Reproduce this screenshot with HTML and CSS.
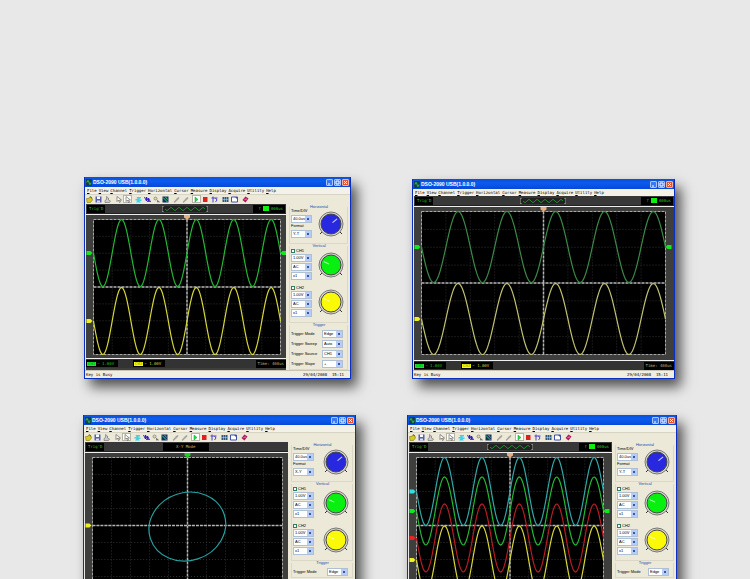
FILE: index.html
```
<!DOCTYPE html>
<html lang="en">
<head>
  <meta charset="UTF-8">
  <meta name="viewport" content="width=device-width, initial-scale=1.0">
  <title>DSO-2090 USB</title>
  <link rel="stylesheet" href="styles.css">
</head>
<body>

  <main class="gallery">
    <div class="row row-top">
      <section class="window" id="two-channel"></section>
      <section class="window window-full" id="full-view"></section>
    </div>
    <div class="row row-bottom">
      <section class="window window-wide" id="xy-mode"></section>
      <section class="window window-medium" id="four-wave"></section>
    </div>
  </main>

  <script src="script.js"></script>
</body>
</html>
```

FILE: styles.css
```
* {
  box-sizing: border-box;
}

body {
  margin: 0;
  background-color: #e8e8e8;
  font-family: "DejaVu Sans Mono", monospace;
  font-size: 4px;
  line-height: 4px;
  color: #000;
}

button,
select,
input,
fieldset,
legend {
  margin: 0;
  padding: 0;
  border: 0;
  font: inherit;
  color: inherit;
}

svg {
  display: block;
}

.gallery {
  height: 100vh;
  overflow: hidden;
  padding-top: 177px;
}

.row {
  display: flex;
  align-items: flex-end;
}

.row-top {
  padding-left: 84px;
  gap: 61px;
}

.row-bottom {
  padding: 36px 0 0 83px;
  gap: 51px;
}

/* window */
.window {
  width: 267px;
  border: 1px solid #0a2fc0;
  border-top-width: 0;
  background-color: #ece9d8;
  box-shadow: 6px 8px 12px rgba(0, 0, 0, 0.65);
}

.window-full {
  width: 263px;
}

.window-wide {
  width: 273px;
}

.window-medium {
  width: 270px;
}

.title-bar {
  display: flex;
  align-items: center;
  gap: 1px;
  height: 10px;
  padding: 0 1px;
  background: linear-gradient(#0a50d8, #0a5cf0 40%, #0848d8);
  color: #fff;
}

.title-bar .app-icon {
  width: 6px;
  height: 7px;
}

.title-bar h2 {
  flex: 1;
  margin: 0;
  font-size: 5px;
  font-weight: bold;
  font-family: "Liberation Sans", sans-serif;
}

.title-bar button {
  width: 7px;
  height: 7px;
  border: 1px solid #a8c4ff;
  border-radius: 1px;
  background-color: #3c78f0;
}

.title-bar button svg {
  width: 5px;
  height: 5px;
}

.title-bar .close {
  background-color: #e4532c;
  border-color: #f0b0a0;
}

.menu {
  display: flex;
  gap: 2px;
  height: 7px;
  padding-left: 2px;
  background-color: #f4f2e8;
}

.menu button {
  background: none;
}

.menu button::first-letter {
  text-decoration: underline;
}

.toolbar {
  display: flex;
  gap: 2px;
  height: 10px;
  border-top: 1px solid #d8d4c4;
}

.toolbar div {
  display: flex;
}

.toolbar button {
  display: flex;
  align-items: center;
  justify-content: center;
  width: 9px;
  height: 8px;
  background: none;
}

.toolbar .pressed {
  background-color: #fff;
  border: 1px solid #b8b4a4;
}

.toolbar svg {
  width: 7px;
  height: 7px;
}

.body {
  display: flex;
  border-left: 1px solid #e8e8e8;
}

/* scope side */
.scope {
  flex: 1;
  min-width: 0;
  background-color: #3e3e3c;
}

.strip {
  display: flex;
  align-items: center;
  justify-content: space-between;
  height: 10px;
  padding: 1px;
  border-bottom: 1px solid #222;
  background-color: #383838;
  color: #20c820;
}

.strip .box {
  display: flex;
  align-items: center;
  gap: 2px;
  height: 8px;
  padding: 0 2px;
  background-color: #000;
}

.strip .chip {
  width: 6px;
  height: 5px;
  background-color: #10f010;
}

.strip .middle {
  width: 46px;
  margin-left: 12px;
}

.strip svg {
  height: 6px;
}

.strip .mode {
  justify-content: center;
  color: #d8b060;
}

.strip .right {
  min-width: 32px;
  justify-content: flex-end;
}

.plot {
  border-top: 1px solid #f0f0f0;
  border-bottom: 1px solid #f0f0f0;
}

.plot svg {
  width: 100%;
  height: 143px;
}

.window-full .plot svg {
  height: 153px;
}

.footer {
  display: flex;
  align-items: center;
  height: 9px;
  background-color: #333;
}

.footer .reading {
  display: flex;
  align-items: center;
  height: 7px;
  margin-right: 15px;
  padding: 0 4px 0 1px;
  background-color: #000;
  color: #20c020;
}

.footer .reading b {
  margin-right: 1px;
  padding: 0 1px;
  background-color: #10f010;
  color: #084;
  font-weight: normal;
}

.footer .yellow {
  color: #d0d040;
}

.footer .yellow b {
  background-color: #f8f810;
  color: #880;
}

.footer .time {
  margin-left: auto;
  padding: 2px;
  background-color: #000;
  color: #c0a878;
}

.status {
  display: flex;
  align-items: center;
  justify-content: space-between;
  height: 8px;
  padding: 0 6px 0 1px;
  border-top: 1px solid #c8c4b4;
  background-color: #f0eee2;
}

/* controls side */
.panel {
  flex: none;
  width: 64px;
  padding: 1px 2px 0 3px;
  font-family: "Liberation Sans", sans-serif;
}

.window-wide .panel {
  width: 67px;
}

.panel fieldset {
  min-width: 0;
  padding: 0 0 0 1px;
  border: 1px solid #dcd8c8;
  border-top: 0;
}

.panel legend {
  margin: 0 auto;
  color: #2050b0;
}

.block {
  display: flex;
  align-items: center;
  justify-content: space-between;
  margin-bottom: 4px;
  padding-right: 2px;
}

.block .fields {
  width: 21px;
}

.block svg {
  width: 28px;
  height: 28px;
}

.fields label {
  display: block;
  height: 6px;
}

.fields .check {
  display: flex;
  align-items: center;
  gap: 1px;
}

.fields input {
  appearance: none;
  width: 4px;
  height: 4px;
  border: 1px solid #308060;
  background-color: #fff;
}

.panel select {
  display: block;
  appearance: none;
  width: 21px;
  height: 8px;
  margin-bottom: 1px;
  padding-left: 1px;
  border: 1px solid #b0c0d4;
  background: linear-gradient(#3858a0, #3858a0) right 2px center / 2px 2px no-repeat,
    linear-gradient(#b8ccf8, #b8ccf8) right / 6px 6px no-repeat, #fff;
}

.fields select + label {
  margin-top: 1px;
}

.trigger-row {
  display: flex;
  align-items: center;
  justify-content: space-between;
  height: 10px;
  padding-right: 4px;
}

.trigger-row:first-of-type {
  margin-top: 2px;
}
```

FILE: script.js
```
const menus = ['File', 'View', 'Channel', 'Trigger', 'Horizontal', 'Cursor', 'Measure', 'Display', 'Acquire', 'Utility', 'Help'];

// 14x14 toolbar icons
const pointer = '<path d="M4 1v10l3-3 2 5 2-1-2-4h4z" fill="#fff" stroke="#333"/>';
const pen = '<path d="M2 12l7-8 3-1-1 3-8 7z" fill="#b0b0a0" stroke="#888"/>';
const icons = {
  open: '<path d="M1 5h5l1-3 5 2 1 4-4 5H2z" fill="#d8c820" stroke="#6a6a10"/><path d="M8 1l4 3" stroke="#208040" stroke-width="2"/>',
  save: '<path d="M1 1h12v12H1z" fill="#5860b0"/><path d="M4 1h6v5H4z" fill="#fff"/><path d="M4 9h6v4H4z" fill="#dde"/>',
  print: '<path d="M5 1l4 3v4l4 2-2 3H2V9l3-2z" fill="#ccc" stroke="#555"/>',
  pointer: pointer,
  pointer2: pointer,
  auto: '<path d="M3 2h9v3H9v2h4v3H9l3 3H2l3-4H1V6h4z" fill="#40d0e8"/>',
  wave: '<path d="M1 2l4 8V2l4 9V4l4 8" fill="none" stroke="#3020c0" stroke-width="2"/><path d="M6 11h7" stroke="#c02060" stroke-width="2"/>',
  find: '<circle cx="5" cy="5" r="3" fill="#dda" stroke="#555"/><path d="M8 8l5 4H8" fill="#888" stroke="#555"/>',
  graph: '<path d="M1 1h12v12H1z" fill="#183060"/><path d="M2 3l9 9M7 2l4 5" stroke="#30d070" stroke-width="2"/>',
  pen: pen,
  pen2: pen,
  run: '<path d="M4 2l6 5-6 5z" fill="#20e040" stroke="#109030"/>',
  stop: '<path d="M2 2h9v10H2z" fill="#e02020"/>',
  single: '<path d="M1 4h12M4 1v12M9 4l3 4-3 4" fill="none" stroke="#5040d0" stroke-width="2"/>',
  grid: '<path d="M1 2h12v10H1z" fill="#305880"/><path d="M1 7h12M5 2v10M9 2v10" stroke="#b8e0f0"/>',
  frame: '<path d="M1 2h12v10H1z" fill="#fff" stroke="#4050b0" stroke-width="2"/><path d="M8 2h5v5z" fill="#4050b0"/>',
  help: '<path d="M1 8l6-7 6 4-6 8z" fill="#b01860"/><path d="M5 7l5-1" stroke="#fff"/>'
};
const groups = [['open', 'save', 'print'], ['pointer', 'pointer2'], ['auto', 'wave', 'find', 'graph'],
  ['pen', 'pen2'], ['run', 'stop', 'single'], ['grid', 'frame'], ['help']];

const GREEN = '#22b832';
const YELLOW = '#d6d63a';

function titleBar() {
  return `<header class="title-bar">
    <svg class="app-icon" viewBox="0 0 12 14"><rect width="12" height="14" fill="#104048"/><path d="M2 7q2-9 4 0t4 0" fill="none" stroke="#30c050" stroke-width="2"/></svg>
    <h2>DSO-2090 USB(1.0.0.0)</h2>
    <button aria-label="Minimize"><svg viewBox="0 0 5 5"><path d="M1 4h2" stroke="#fff"/></svg></button>
    <button aria-label="Maximize"><svg viewBox="0 0 5 5"><path d="M1 1h3v3H1z" fill="none" stroke="#fff"/></svg></button>
    <button class="close" aria-label="Close"><svg viewBox="0 0 5 5"><path d="M1 1l3 3M4 1L1 4" stroke="#fff"/></svg></button>
  </header>
  <nav class="menu">${menus.map(m => `<button>${m}</button>`).join('')}</nav>`;
}

function toolbar() {
  return '<div class="toolbar">' + groups.map(group => '<div>' + group.map(name => {
    const pressed = name === 'pointer2' || name === 'run' ? ' class="pressed"' : '';
    return `<button${pressed} aria-label="${name}"><svg viewBox="0 0 14 14">${icons[name]}</svg></button>`;
  }).join('') + '</div>').join('') + '</div>';
}

// sine path with five periods across the grid
function sine(x, width, mid, amp) {
  let d = '';
  for (let i = 0; i <= width; i++) {
    const y = mid + amp * Math.sin(2 * Math.PI * 5 * i / width);
    d += (i ? 'L' : 'M') + (x + i) + ' ' + y.toFixed(2);
  }
  return d;
}

function plot(s) {
  const { x, y, w, h } = s.grid;
  const cx = x + w / 2;
  const cy = y + h / 2;
  let out = `<rect x="${x}" y="${y}" width="${w}" height="${h}" fill="#000"/>`;
  for (let i = 1; i < 10; i++) {
    out += `<path d="M${x + w * i / 10} ${y}v${h}" stroke="#303034" stroke-dasharray="1 2"/>`;
  }
  for (let i = 1; i < 8; i++) {
    out += `<path d="M${x} ${y + h * i / 8}h${w}" stroke="#303034" stroke-dasharray="1 2"/>`;
  }
  out += `<rect x="${x}" y="${y}" width="${w}" height="${h}" fill="none" stroke="#a8a8a8" stroke-dasharray="3 1"/>`;
  out += `<path d="M${cx} ${y}v${h}M${x} ${cy}h${w}" stroke="#b4b4b4" stroke-width="1.5" stroke-dasharray="3 1"/>`;
  s.waves.forEach(wave => {
    out += `<path d="${sine(x, w, wave.mid, wave.amp)}" fill="none" stroke="${wave.color}" stroke-width="1.2"/>`;
    out += `<path d="M${x - 7} ${wave.mid - 2}h4l2 2-2 2h-4z" fill="${wave.mark}"/>`;
  });
  if (s.xy) {
    out += `<ellipse cx="${cx - 0.5}" cy="${cy + 1}" rx="39" ry="34" transform="rotate(-18 ${cx} ${cy})" fill="none" stroke="#28a0a0" stroke-width="1.2"/>`;
    out += `<path d="M${x - 7} ${cy - 2}h4l2 2-2 2h-4z" fill="#f0f020"/>`;
  } else {
    out += `<path d="M${x + w + 6} ${s.level - 2}h-4l-2 2 2 2h4z" fill="#10e820"/>`;
  }
  out += `<path d="M${cx - 3} ${y - 5}h6v3l-3 2-3-2z" fill="${s.xy ? '#20d020' : '#e8b080'}"/>`;
  return `<svg viewBox="0 0 ${s.size[0]} ${s.size[1]}" preserveAspectRatio="none">${out}</svg>`;
}

function footer() {
  return `<div class="footer">
      <span class="reading"><b>CH1</b>~ 1.00V</span>
      <span class="reading yellow"><b>CH2</b>~ 1.00V</span>
      <span class="time">Time: 400us</span>
    </div>`;
}

function scope(s) {
  const middle = s.xy
    ? '<span class="box middle mode">X-Y Mode</span>'
    : `<svg class="middle" viewBox="0 0 46 6"><rect width="46" height="6" fill="#222"/><path d="${sine(3, 40, 3, 1.5)}" fill="none" stroke="#208830"/><path d="M2 0H0v6h2M44 0h2v6h-2" fill="none" stroke="#aaa"/></svg>`;
  const right = s.xy ? '<span class="right"></span>' : '<span class="box right">f <i class="chip"></i> 000us</span>';
  return `<div class="scope">
    <div class="strip"><span class="box">Trig'D</span>${middle}${right}</div>
    <div class="plot">${plot(s)}</div>
    ${s.preview ? '' : footer()}
  </div>`;
}

function knob(color, angle) {
  return `<svg viewBox="0 0 28 28">
    <path d="M6 21l-3 3M22 21l3 3" stroke="#333"/>
    <circle cx="14" cy="14" r="12" fill="#d8d6cc" stroke="#777"/>
    <circle cx="14" cy="14" r="10" fill="${color}" stroke="#444"/>
    <path d="M16 14h6" stroke="#fff" stroke-opacity=".8" transform="rotate(${angle} 14 14)"/>
  </svg>`;
}

function select(id, value) {
  return `<select id="${id}" aria-label="${id}"><option>${value}</option></select>`;
}

function channel(id, n, color) {
  return `<div class="block"><div class="fields">
    <label class="check"><input type="checkbox" checked>CH${n}</label>
    ${select(id + '-volt' + n, '1.00V')}${select(id + '-coupling' + n, 'AC')}${select(id + '-probe' + n, 'x1')}
  </div>${knob(color, 205)}</div>`;
}

function panel(id, s) {
  const rows = [['Mode', 'Edge'], ['Sweep', 'Auto'], ['Source', 'CH1'], ['Slope', '+']].slice(0, s.preview ? 1 : 4);
  return `<aside class="panel">
    <fieldset><legend>Horizontal</legend>
      <div class="block"><div class="fields">
        <label for="${id}-time">Time/DIV</label>${select(id + '-time', '40.0us')}
        <label for="${id}-format">Format</label>${select(id + '-format', s.xy ? 'X-Y' : 'Y-T')}
      </div>${knob('#2828e0', -40)}</div>
    </fieldset>
    <fieldset><legend>Vertical</legend>
      ${channel(id, 1, '#08f010')}${channel(id, 2, '#fafa08')}
    </fieldset>
    <fieldset><legend>Trigger</legend>
      ${rows.map(r => `<div class="trigger-row"><label for="${id}-${r[0]}">Trigger ${r[0]}</label>${select(id + '-' + r[0], r[1])}</div>`).join('')}
    </fieldset>
  </aside>`;
}

function statusBar() {
  return '<footer class="status"><span>Key is Busy</span><span>29/04/2008&nbsp; 15:11</span></footer>';
}

function drawWindow(id, s) {
  document.getElementById(id).innerHTML = titleBar() + (s.full ? '' : toolbar()) +
    `<div class="body">${scope(s)}${s.full ? '' : panel(id, s)}</div>` +
    (s.preview ? '' : statusBar());
}

drawWindow('two-channel', {
  size: [200, 143], grid: { x: 7.5, y: 4.5, w: 187, h: 135 }, level: 38,
  waves: [
    { mid: 38, amp: 33.5, color: GREEN, mark: '#10e820' },
    { mid: 106, amp: 33.5, color: YELLOW, mark: '#f0f020' }
  ]
});

drawWindow('full-view', {
  full: true,
  size: [260, 153], grid: { x: 7.5, y: 4.5, w: 244, h: 143 }, level: 40,
  waves: [
    { mid: 40, amp: 35.5, color: '#3c8a48', mark: '#10e820' },
    { mid: 112, amp: 35.5, color: '#c2c272', mark: '#f0f020' }
  ]
});

// previews have no footer or status bar
drawWindow('xy-mode', {
  xy: true, preview: true,
  size: [204, 143], grid: { x: 7.5, y: 4.5, w: 191, h: 136 },
  waves: []
});

drawWindow('four-wave', {
  preview: true,
  size: [203, 143], grid: { x: 7.5, y: 4.5, w: 187, h: 136 }, level: 58,
  waves: [
    { mid: 38.5, amp: 34, color: '#30a8a8', mark: '#30e0e0' },
    { mid: 58, amp: 34, color: GREEN, mark: '#10e820' },
    { mid: 85, amp: 34, color: '#b81c24', mark: '#f02020' },
    { mid: 107, amp: 34, color: YELLOW, mark: '#f0f020' }
  ]
});
```
